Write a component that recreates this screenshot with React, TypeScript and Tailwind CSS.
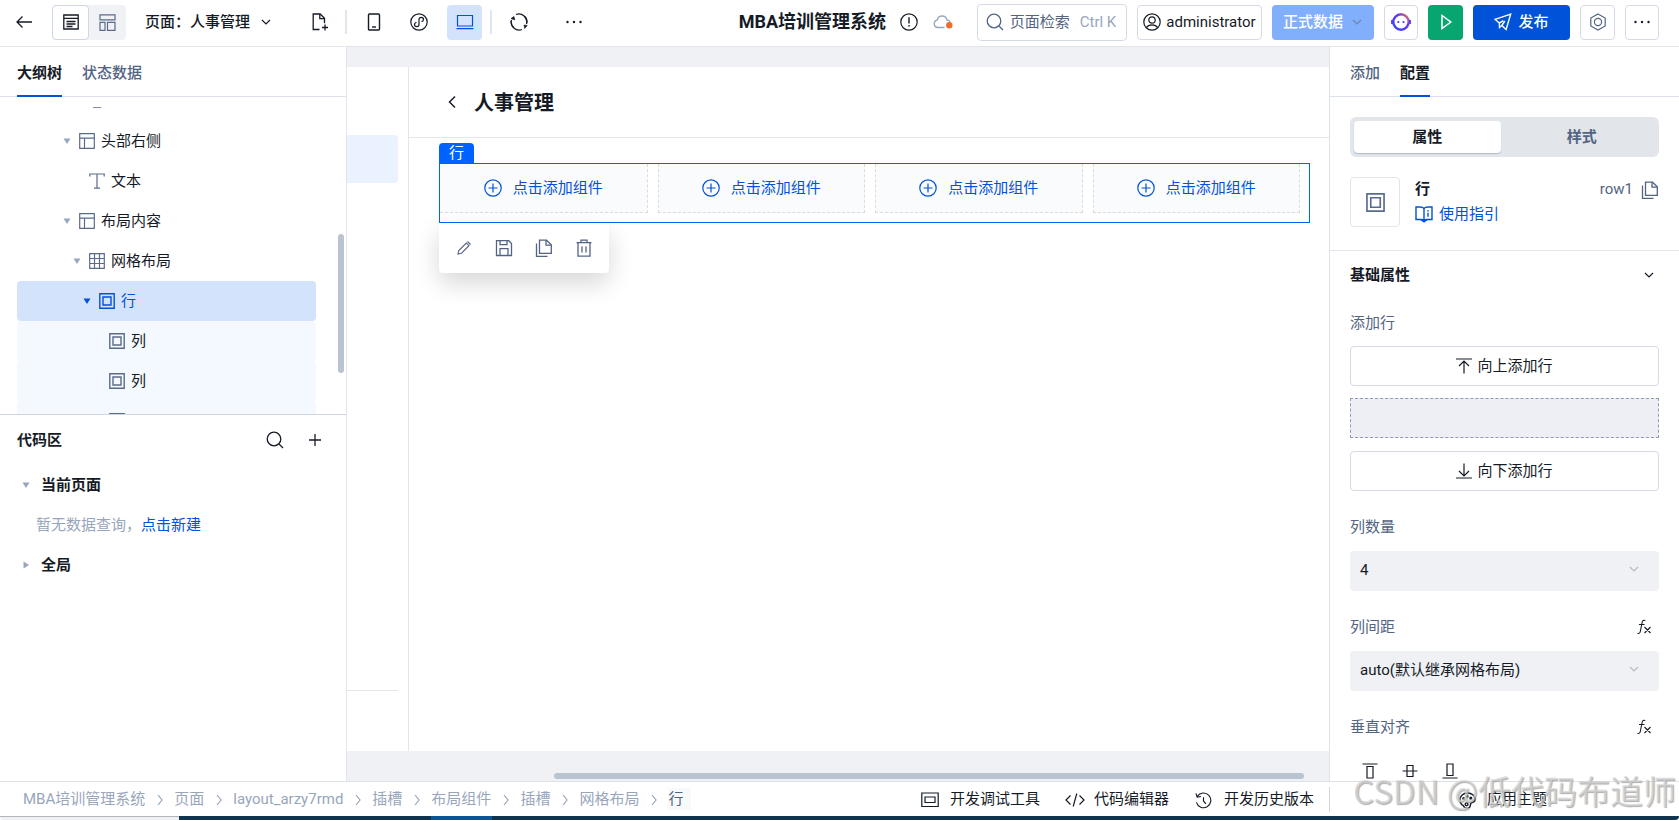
import type { ReactNode } from "react";

type IconProps = { className?: string; size?: number; box?: number; sw?: number; children: ReactNode };

function Icon({ className = "", size = 18, box = 18, sw = 1.2, children }: IconProps) {
  return (
    <svg
      aria-hidden="true"
      className={`shrink-0 ${className}`}
      width={size}
      height={size}
      viewBox={`0 0 ${box} ${box}`}
      fill="none"
      stroke="currentColor"
      strokeWidth={sw}
    >
      {children}
    </svg>
  );
}

const ChevronDown = ({ className = "" }: { className?: string }) => (
  <Icon size={12} box={12} className={className}>
    <path d="M2 4l4 4 4-4" />
  </Icon>
);

const Dots = () => (
  <Icon>
    <g fill="currentColor" stroke="none">
      <circle cx="2.5" cy="9" r="1.2" />
      <circle cx="9" cy="9" r="1.2" />
      <circle cx="15.5" cy="9" r="1.2" />
    </g>
  </Icon>
);

const SearchIcon = ({ className = "" }: { className?: string }) => (
  <Icon className={className} sw={1.3}>
    <circle cx="8" cy="8" r="6.8" />
    <path d="M13 13l4 4" />
  </Icon>
);

const CopyIcon = ({ size = 18 }: { size?: number }) => (
  <Icon size={size} sw={1.3}>
    <path d="M4.5 1.2h7l4.8 4.6v8.5H4.5z" />
    <path d="M11 1.2v5h5" />
    <path d="M1.5 4.5v12.8h11" />
  </Icon>
);

const LayoutIcon = () => (
  <Icon size={16} box={16}>
    <path d="M.7.7h14.6v14.6H.7zM.7 5.2h14.6M5.5 5.2v10" />
  </Icon>
);

const GridIcon = () => (
  <Icon size={16} box={16}>
    <path d="M.7.7h14.6v14.6H.7zM.7 5.5h14.6M.7 10.5h14.6M5.5.7v14.6M10.5.7v14.6" />
  </Icon>
);

const BoxIcon = ({ size = 16 }: { size?: number }) => (
  <Icon size={size} box={16} sw={1.4}>
    <path d="M.8.8h14.4v14.4H.8zM4 4h8v8H4z" />
  </Icon>
);

const TextIcon = () => (
  <Icon size={16} box={16}>
    <path d="M.8 3.5V1h14.4v2.5M8 1v14M5 15.2h6" />
  </Icon>
);

function Caret({ right = false }: { right?: boolean }) {
  return (
    <svg aria-hidden="true" className="shrink-0" width="8" height="8" viewBox="0 0 8 8" fill="currentColor">
      {right ? <path d="M1.5 .5L7 4 1.5 7.5z" /> : <path d="M.5 1.5h7L4 7z" />}
    </svg>
  );
}

const treeRows = [
  { id: "header-right", label: "头部右侧", indent: "pl-[42px]", caret: true, icon: <LayoutIcon /> },
  { id: "text", label: "文本", indent: "pl-[52px]", caret: false, icon: <TextIcon /> },
  { id: "content", label: "布局内容", indent: "pl-[42px]", caret: true, icon: <LayoutIcon /> },
  { id: "grid", label: "网格布局", indent: "pl-[52px]", caret: true, icon: <GridIcon /> },
  { id: "row", label: "行", indent: "pl-[62px]", caret: true, icon: <BoxIcon />, tone: "selected" },
  { id: "col1", label: "列", indent: "pl-[72px]", caret: false, icon: <BoxIcon />, tone: "child" },
  { id: "col2", label: "列", indent: "pl-[72px]", caret: false, icon: <BoxIcon />, tone: "child" },
  { id: "col3", label: "", indent: "pl-[72px]", caret: false, icon: <BoxIcon />, tone: "child" },
];

const crumbs = ["MBA培训管理系统", "页面", "layout_arzy7rmd", "插槽", "布局组件", "插槽", "网格布局", "行"];

const outlineButton = "flex items-center justify-center rounded-[4px] border border-[#d6dae6] bg-white";

function Header() {
  return (
    <header className="flex h-[47px] shrink-0 items-start justify-between border-b border-[#e2e5ea] pt-1 pr-5 pl-3">
      <div className="flex h-9 items-center">
        <button aria-label="返回" className="flex h-9 w-6 items-center justify-center">
          <Icon sw={1.3}>
            <path d="M17 9H2M7.5 3.5L2 9l5.5 5.5" />
          </Icon>
        </button>
        <div className="ml-4 flex h-[35px] rounded-[4px] bg-[#f0f2f6]">
          <button aria-label="编辑视图" className="flex w-[37px] items-center justify-center rounded-[4px] border border-[#cfd7e6] bg-white">
            <Icon size={16} box={16} sw={1.3}>
              <path d="M.8 1h14.4v14H.8zM.8 4.3h14.4M3.500 7.500h9M3.500 10h9M3.500 12.500h6" />
            </Icon>
          </button>
          <button aria-label="布局视图" className="flex w-[37px] items-center justify-center text-[#5a6b8c]">
            <Icon size={17} box={17} sw={1.2}>
              <path d="M1 .8h15v5H1zM1 8.300h5v8H1zM8.500 8.300H16v8H8.500z" />
            </Icon>
          </button>
        </div>
        <button className="ml-[19px] flex items-center gap-[10px] font-medium">
          <span>页面：人事管理</span>
          <ChevronDown />
        </button>
        <button aria-label="新建页面" className="ml-[39px] flex w-[18px] justify-center">
          <Icon sw={1.3}>
            <path d="M8.500 16.500H2.200V1h7l4.300 4.300v5" />
            <path d="M8.800 1v4.700h4.700M14 11.500v6M11 14.500h6" />
          </Icon>
        </button>
        <span className="ml-4 h-6 w-[2px] bg-[#e2e5ec]" />
        <button aria-label="手机" className="ml-[18px]">
          <Icon sw={1.4}>
            <rect x="3.500" y="1" width="11" height="16" rx="1" />
            <path d="M7 14h4" />
          </Icon>
        </button>
        <button aria-label="小程序" className="ml-[27px]">
          <Icon>
            <circle cx="9" cy="9" r="8.200" />
            <path d="M9 6.500v5c0 1.500-1 2.200-2.200 2.200S4.500 12.800 4.500 11.500 5.500 9.600 6.500 9.400M9 11.500v-5C9 5 10 4.300 11.200 4.300s2.300.9 2.300 2.200-1 1.900-2 2.100" />
          </Icon>
        </button>
        <button aria-label="桌面" className="ml-[19px] flex h-[35px] w-[35px] items-center justify-center rounded-[4px] bg-[#d4e3fc] text-[#0052d9]">
          <Icon sw={1.2}>
            <path d="M1.500 2.500h15v10.500h-15zM.5 15.600h17" />
          </Icon>
        </button>
        <span className="ml-2 h-6 w-[2px] bg-[#e2e5ec]" />
        <button aria-label="刷新" className="ml-[18px]">
          <Icon sw={1.3}>
            <path d="M6 1.500A8 8 0 0116.500 11M12 16.500A8 8 0 011.500 7" />
            <path d="M3.500 14.500A8 8 0 011 8.500M14.500 3.200A8 8 0 0117 9.500" />
            <path d="M1 5.500l3-2 .8 3.500zM14 12l3.200.5-2.500 3z" fill="currentColor" strokeWidth=".6" />
          </Icon>
        </button>
        <button aria-label="更多操作" className="ml-[37px]">
          <Dots />
        </button>
      </div>

      <div className="flex h-9 items-center">
        <h1 className="text-[18px] font-bold">MBA培训管理系统</h1>
        <button aria-label="提示" className="ml-[14px]">
          <Icon>
            <circle cx="9" cy="9" r="8.200" />
            <path d="M9 4.200v6.300M9 12v1.500" strokeWidth="1.400" />
          </Icon>
        </button>
        <button aria-label="云端状态" className="ml-[15px] text-[#98a6bc]">
          <Icon size={20} box={20} sw={1.3}>
            <path d="M11.500 15.500H5a3.800 3.800 0 01-.8-7.500 5 5 0 019.800 0c1.500.3 2.600 1 3.200 2" />
            <circle cx="16.300" cy="13.300" r="3.200" fill="#ed6c2f" stroke="none" />
          </Icon>
        </button>
        <button className={`${outlineButton} ml-6 h-[37px] w-[150px] gap-[6px] pr-[2px] text-[#536482]`}>
          <SearchIcon />
          <span>页面检索</span>
          <span className="ml-1 text-[#98a6bc]">Ctrl K</span>
        </button>
        <button className={`${outlineButton} ml-[10px] h-[35px] w-[125px] gap-[5px]`}>
          <Icon>
            <circle cx="9" cy="9" r="8.200" />
            <circle cx="9" cy="7" r="3.200" />
            <path d="M3.300 14.800c1.500-2.500 3.500-3 5.700-3s4.200.5 5.700 3" />
          </Icon>
          <span>administrator</span>
        </button>
        <button className="ml-[10px] flex h-[35px] w-[102px] items-center justify-center gap-2 rounded-[4px] bg-[#82affb] text-white">
          <span className="font-medium">正式数据</span>
          <ChevronDown className="text-[#6c85ad]" />
        </button>
        <button aria-label="智能助手" className={`${outlineButton} ml-[10px] h-[35px] w-[34px]`}>
          <svg aria-hidden="true" className="shrink-0" width="20" height="20" viewBox="0 0 20 20" fill="none">
            <defs>
              <linearGradient id="bot" x1="1" y1="0" x2="0" y2="1">
                <stop offset="0" stopColor="#ff7a45" />
                <stop offset=".35" stopColor="#6a35f2" />
                <stop offset="1" stopColor="#2f49ff" />
              </linearGradient>
            </defs>
            <circle cx="10" cy="10" r="7.700" stroke="url(#bot)" strokeWidth="2.400" />
            <path d="M1 8v4M19 8v4" stroke="#4a3bf5" strokeWidth="1.800" />
            <circle cx="7.300" cy="10" r="1.100" fill="#4a35f2" />
            <circle cx="12.500" cy="10" r="1.100" fill="#4a35f2" />
          </svg>
        </button>
        <button aria-label="预览" className="ml-[10px] flex h-[35px] w-[35px] items-center justify-center rounded-[4px] bg-[#07a670] text-white">
          <Icon sw={1.5}>
            <path d="M5 2.500L13.800 9 5 15.500z" />
          </Icon>
        </button>
        <button className="ml-[10px] flex h-[35px] w-[97px] items-center justify-center gap-[6px] rounded-[4px] bg-[#0052d9] text-white">
          <Icon sw={1.4}>
            <path d="M16.700 1.200L1 6.300l4.300 3.800.2 4.400 2.300-2 4.300 4zM5.300 10.100l4-2.500M7.800 12.500l3-4.500" />
          </Icon>
          <span className="font-medium">发布</span>
        </button>
        <button aria-label="设置" className={`${outlineButton} ml-[10px] h-[35px] w-[35px] text-[#536482]`}>
          <Icon>
            <path d="M9 1l7.200 4v8L9 17l-7.200-4V5z" />
            <circle cx="9" cy="9" r="3.600" />
          </Icon>
        </button>
        <button aria-label="更多" className={`${outlineButton} ml-[10px] h-[35px] w-[34px]`}>
          <Dots />
        </button>
      </div>
    </header>
  );
}

function LeftPanel() {
  return (
    <aside className="flex w-[347px] shrink-0 flex-col border-r border-[#e2e5ea]">
      <div className="flex h-[50px] shrink-0 gap-5 border-b border-[#dde1ea] pl-[17px] font-medium">
        <button className="-mb-px border-b-2 border-[#0052d9] pt-[3px] font-bold">大纲树</button>
        <button className="-mb-px border-b-2 border-transparent pt-[3px] text-[#536482]">状态数据</button>
      </div>
      <div className="flex h-[318px] shrink-0 overflow-hidden border-b border-[#cfd6e2]">
        <ul className="ml-[17px] w-[299px]">
          <li className="flex h-6 items-start pl-[76px] text-[#5a6b8c]">
            <span className="mt-[10px] h-px w-2 bg-[#7d8ba5]" />
          </li>
          {treeRows.map((row) => {
            const tone =
              row.tone === "selected"
                ? "bg-[#d4e3fc] text-[#0052d9]"
                : row.tone === "child"
                  ? "bg-[#f4f8ff]"
                  : "";
            const iconTone = row.tone === "selected" ? "text-[#0052d9]" : "text-[#5a6b8c]";
            const caretTone = row.tone === "selected" ? "text-[#0052d9]" : "text-[#98a6bc]";
            return (
              <li key={row.id} className={`flex h-10 items-center rounded-[4px] ${row.indent} ${tone}`}>
                <span className={`mr-1 flex w-4 justify-center ${caretTone}`}>{row.caret && <Caret />}</span>
                <span className={iconTone}>{row.icon}</span>
                <span className="ml-[6px]">{row.label}</span>
              </li>
            );
          })}
        </ul>
        <div className="mt-[137px] ml-[22px] h-[139px] w-[6px] rounded-full bg-[#bac3d0]" />
      </div>
      <section>
        <div className="flex h-[50px] items-center pr-[22px] pl-[17px]">
          <h2 className="flex-1 font-bold">代码区</h2>
          <button aria-label="搜索代码">
            <SearchIcon />
          </button>
          <button aria-label="新建代码" className="ml-[22px]">
            <Icon sw={1.3}>
              <path d="M9 3v12M3 9h12" />
            </Icon>
          </button>
        </div>
        <button className="flex h-10 items-center pl-[22px] font-bold">
          <span className="mr-[11px] text-[#98a6bc]"><Caret /></span>当前页面
        </button>
        <p className="flex h-10 items-center pl-9 text-[#98a6bc]">
          暂无数据查询，<a href="#new" className="text-[#0052d9]">点击新建</a>
        </p>
        <button className="flex h-10 items-center pl-[22px] font-bold">
          <span className="mr-[11px] text-[#98a6bc]"><Caret right /></span>全局
        </button>
      </section>
    </aside>
  );
}

function Canvas() {
  return (
    <main className="flex min-w-0 flex-1 flex-col bg-[#eff1f5] pt-5">
      <div className="flex min-h-0 flex-1 bg-white">
        <div className="flex w-[62px] shrink-0 flex-col justify-between border-r border-[#e2e5ea] pr-[10px] pt-[68px] pb-[60px]">
          <div className="h-12 rounded-r-[4px] bg-[#eaf1ff]" />
          <div className="h-px bg-[#e2e5ea]" />
        </div>
        <div className="min-w-0 flex-1">
          <div className="flex h-[71px] items-center border-b border-[#e6e6e6] pl-[34px]">
            <button aria-label="返回上一页">
              <Icon sw={1.5}>
                <path d="M12 3.500L6.500 9l5.500 5.500" />
              </Icon>
            </button>
            <h2 className="ml-[13px] pt-px text-[20px] font-bold">人事管理</h2>
          </div>
          <div className="pt-[5px] pr-[19px] pl-[30px]">
            <span className="flex h-5 w-[35px] items-center justify-center rounded-t-[4px] bg-[#0062ff] text-white">行</span>
            <div className="grid grid-cols-4 gap-[10px] border border-[#0062ff] pr-[9px] pb-[9px]">
              {[0, 1, 2, 3].map((i) => (
                <button
                  key={i}
                  className="flex h-[49px] items-center justify-center gap-[11px] border border-t-0 border-dashed border-[#d9dbdf] bg-[#fafbfd] text-[#0052d9] first:border-l-0"
                >
                  <Icon>
                    <circle cx="9" cy="9" r="8.200" />
                    <path d="M9 4.500v9M4.500 9h9" />
                  </Icon>
                  <span>点击添加组件</span>
                </button>
              ))}
            </div>
            <div className="flex h-[50px] w-[170px] items-center justify-around rounded-b-[4px] bg-white px-[5px] text-[#536482] shadow-[0_10px_24px_rgba(0,0,0,0.16)]">
              <button aria-label="编辑">
                <Icon size={18} sw={1.1}>
                  <path d="M3 15l.8-3.500 7.500-7.500 2.700 2.700-7.500 7.500zM12.500 2.500l3 3" />
                </Icon>
              </button>
              <button aria-label="保存">
                <Icon sw={1.3}>
                  <path d="M1.500 1.700h12.200l2.800 2.800v12H1.500z" />
                  <path d="M5 1.700v4h7v-4M5 16.500V9.700h8v6.800" />
                </Icon>
              </button>
              <button aria-label="复制">
                <CopyIcon />
              </button>
              <button aria-label="删除">
                <Icon sw={1.3}>
                  <path d="M1.500 3.600h15M3 3.600v13.600h12V3.600M6 3.600V1.200h6v2.400M7 7.500v6M11 7.500v6" />
                </Icon>
              </button>
            </div>
          </div>
        </div>
      </div>
      <div className="flex h-[30px] shrink-0 items-end pr-[25px] pb-[2px] pl-[207px]">
        <div className="h-[6px] flex-1 rounded-full bg-[#bac3d0]" />
      </div>
    </main>
  );
}

function FxIcon() {
  return (
    <Icon size={16} box={16} sw={1.1}>
      <path d="M9.300 1.500C7.500.8 6.500 1.500 6.100 3.500L4.300 12.500C4 14 3 14.800 1.500 14.300M3 5.500h5.500M8.500 8l6 6M14.500 8l-6 6" />
    </Icon>
  );
}

function SelectField({ id, label, value, fx = false }: { id: string; label: string; value: string; fx?: boolean }) {
  return (
    <div className="mt-3 flex flex-col">
      <div className="flex h-12 items-center justify-between pr-[7px]">
        <label htmlFor={id} className="text-[#536482]">{label}</label>
        {fx && (
          <button aria-label={`${label}表达式`}>
            <FxIcon />
          </button>
        )}
      </div>
      <div className="grid h-10 items-center rounded-[4px] bg-[#eff1f5]">
        <select id={id} className="col-start-1 row-start-1 h-10 w-full appearance-none bg-transparent px-[10px] pb-[2px]">
          <option>{value}</option>
        </select>
        <ChevronDown className="pointer-events-none col-start-1 row-start-1 mr-[19px] mb-1 justify-self-end text-[#b4bac6]" />
      </div>
    </div>
  );
}

function RightPanel() {
  return (
    <aside className="flex w-[350px] shrink-0 flex-col overflow-hidden border-l border-[#dde1ea]">
      <div className="flex h-[50px] shrink-0 gap-5 border-b border-[#dde1ea] pl-5">
        <button className="-mb-px border-b-2 border-transparent pt-[3px] font-medium text-[#536482]">添加</button>
        <button className="-mb-px border-b-2 border-[#0052d9] pt-[3px] font-bold">配置</button>
      </div>
      <div className="shrink-0 border-b border-[#e2e5ea] px-5 pt-5 pb-[23px]">
        <div className="grid h-10 grid-cols-2 gap-2 rounded-[6px] bg-[#e2e5ea] p-1">
          <button className="h-8 rounded-[4px] bg-white font-bold shadow-[0_1px_1px_#aeb8c8]">属性</button>
          <button className="h-8 font-bold text-[#536482]">样式</button>
        </div>
        <div className="mt-5 flex h-[50px] items-start">
          <div className="flex h-[50px] w-[50px] items-center justify-center rounded-[4px] border border-[#e2e5ea] text-[#5a6b8c]">
            <BoxIcon size={19} />
          </div>
          <div className="ml-[15px] flex-1">
            <h2 className="leading-6 font-bold">行</h2>
            <a href="#guide" className="flex items-center gap-[6px] leading-[26px] text-[#0052d9]">
              <Icon sw={1.4}>
                <path d="M9 15.200V3.500C8 2.200 6.500 2 5 2H1v12.500h5c1.500 0 2.300.2 3 1 .7-.8 1.500-1 3-1h5V2h-4c-1.500 0-3 .2-4 1.500" />
                <path d="M13 5v1.500M13 7.800v4M6 14.800h6L9 17z" />
              </Icon>
              使用指引
            </a>
          </div>
          <span className="leading-6 text-[#536482]">row1</span>
          <button aria-label="复制标识" className="mt-1 ml-2 text-[#536482]">
            <CopyIcon />
          </button>
        </div>
      </div>
      <div className="shrink-0 px-5">
        <button className="flex h-12 w-full items-center justify-between pr-1 font-bold">
          基础属性
          <ChevronDown />
        </button>
        <p className="flex h-12 items-center text-[#536482]">添加行</p>
        <button className={`${outlineButton} -mt-px h-10 w-full gap-[5px]`}>
          <Icon size={16} box={16}>
            <path d="M0 1h16M8 15.500V3M3 8l5-5 5 5" />
          </Icon>
          向上添加行
        </button>
        <div className="mt-3 h-10 border border-dashed border-[#8f9ab5] bg-[#eeeff4]" />
        <button className={`${outlineButton} mt-[13px] h-10 w-full gap-[5px]`}>
          <Icon size={16} box={16}>
            <path d="M0 15h16M8 .5V13M3 8l5 5 5-5" />
          </Icon>
          向下添加行
        </button>
        <SelectField id="column-count" label="列数量" value="4" />
        <SelectField id="column-gap" label="列间距" value="auto(默认继承网格布局)" fx />
        <div className="mt-3 flex h-12 items-center justify-between pr-[7px] text-[#536482]">
          垂直对齐
          <button aria-label="垂直对齐表达式" className="text-[#151b26]">
            <FxIcon />
          </button>
        </div>
        <div className="flex h-10 items-center gap-6 pl-3">
          <button aria-label="顶部对齐">
            <Icon size={16} box={16}>
              <path d="M.5 1h15M5 3.500h6v11.500H5z" />
            </Icon>
          </button>
          <button aria-label="居中对齐">
            <Icon size={16} box={16}>
              <path d="M.5 8h15M5 2.500h6v11H5z" />
            </Icon>
          </button>
          <button aria-label="底部对齐">
            <Icon size={16} box={16}>
              <path d="M.5 15h15M5 1h6v11.500H5z" />
            </Icon>
          </button>
        </div>
      </div>
    </aside>
  );
}

function Footer() {
  return (
    <footer className="flex h-[35px] shrink-0 items-center border-t border-[#dde1ea]">
      <nav aria-label="路径" className="flex flex-1 items-center gap-[11px] pl-[23px] text-[#98a6bc]">
        {crumbs.map((name, i) => (
          <span key={i} className="flex items-center gap-[10px]">
            {i > 0 && (
              <Icon size={10} box={10} className="-mx-px mt-[2px]">
                <path d="M3 0l4 5-4 5" />
              </Icon>
            )}
            {i === crumbs.length - 1 ? (
              <span className="bg-[#f8f9fb] pr-2 text-[#536482]">{name}</span>
            ) : (
              <a href="#crumb">{name}</a>
            )}
          </span>
        ))}
      </nav>
      <div className="flex items-center">
        <button className="flex items-center gap-[11px]">
          <Icon className="mt-[2px]">
            <path d="M.8 2h16.400v13.500H.8zM4 6h10v5.500H4z" />
          </Icon>
          开发调试工具
        </button>
        <button className="ml-[25px] flex items-center gap-[9px]">
          <Icon size={20} box={20} className="mt-[2px]">
            <path d="M5.500 5.500L1 10l4.500 4.500M14.500 5.500L19 10l-4.500 4.500M11.800 3.500l-3.600 13" />
          </Icon>
          代码编辑器
        </button>
        <button className="ml-[26px] flex items-center gap-3 pr-[15px]">
          <Icon size={17} className="mt-[2px]">
            <path d="M2.500 4.500A7.800 7.800 0 111.500 11M1 1.500l1.300 3.800 4-.5M9 5.500V9.500l2.500 3" />
          </Icon>
          开发历史版本
        </button>
      </div>
      <div className="flex h-[25px] w-[350px] items-center border-l border-[#d0d6e0] pl-[129px]">
        <button className="flex items-center gap-[11px]">
          <Icon size={17} sw={1.5} className="mt-[2px]">
            <path d="M9 1C4.500 1 1 4.500 1 8.500c0 3 1.800 5 3.800 6.200.5 1.500 1.800 2.300 3.500 2.300 2.300 0 3.700-1.200 3.700-3 0-1.500.8-2.500 2.500-3 1.500-.4 2.500-1.500 2.500-3C17 4 13.500 1 9 1z" />
            <circle cx="5" cy="7" r=".9" />
            <circle cx="8.500" cy="4.500" r=".9" />
            <circle cx="12.500" cy="6.500" r=".9" />
            <circle cx="8" cy="13" r="1.500" />
          </Icon>
          应用主题
        </button>
      </div>
    </footer>
  );
}

export default function App() {
  return (
    <div className="relative flex h-screen flex-col overflow-hidden bg-white font-[Roboto,'Noto_Sans_CJK_SC',sans-serif] text-[15px] leading-[22px] whitespace-nowrap text-[#151b26]">
      <Header />
      <div className="flex min-h-0 flex-1">
        <LeftPanel />
        <Canvas />
        <RightPanel />
      </div>
      <Footer />
      <div className="flex h-1 shrink-0">
        <div className="w-[179px] rounded-bl-[4px] border-t border-[#b4b6ba] bg-[#eef0f3]" />
        <div className="w-[252px] bg-[#0f3450]" />
        <div className="w-[61px] bg-[#0a5596]" />
        <div className="flex-1 rounded-br-[4px] bg-[#0f3450]" />
      </div>
      <span className="pointer-events-none absolute right-[3px] bottom-[6px] font-['Noto_Sans_CJK_SC',sans-serif] text-[33px] leading-[48px] text-[#d6d6d6]/70 [text-shadow:1px_1px_1px_#8a8a8ab0]">
        CSDN @低代码布道师
      </span>
    </div>
  );
}
